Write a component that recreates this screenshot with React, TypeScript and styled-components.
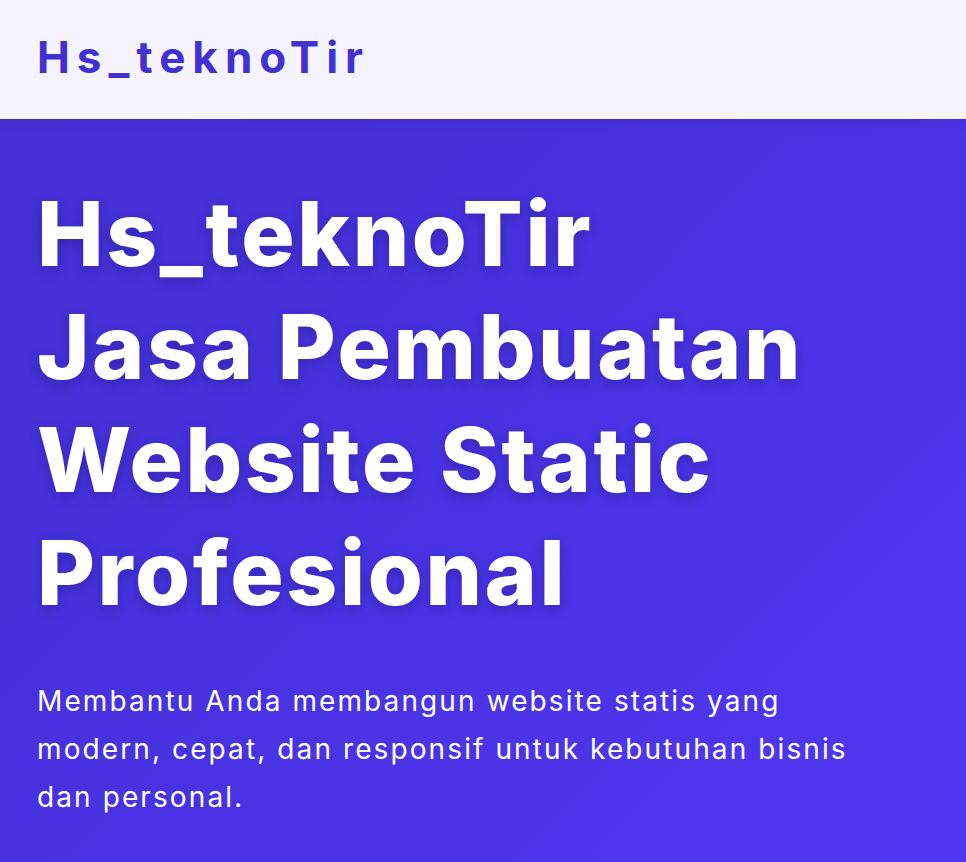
import React from "react";
import styled, { createGlobalStyle } from "styled-components";

const GlobalStyle = createGlobalStyle`
  * {
    box-sizing: border-box;
  }

  body {
    margin: 0;
    font-family: "Inter", "Noto Sans", sans-serif;
    background: #4a34e4;
  }
`;

const Header = styled.header`
  position: relative;
  z-index: 2;
  height: 119px;
  display: flex;
  align-items: center;
  padding: 0 37px 6px;
  background: #f6f4fe;
  box-shadow: 0 2px 12px rgba(30, 20, 90, 0.12);
`;

const Logo = styled.div`
  font-size: 44px;
  font-weight: 700;
  letter-spacing: 7px;
  color: #4330d2;
`;

const Hero = styled.section`
  min-height: 743px;
  padding: 58px 37px 48px;
  background: linear-gradient(135deg, #4230d2 0%, #4833e2 50%, #5137f2 100%);
  color: #ffffff;
`;

const Title = styled.h1`
  margin: 0;
  font-size: 89px;
  font-weight: 800;
  line-height: 113px;
  letter-spacing: 2.6px;
  text-shadow: 0 4px 12px rgba(20, 10, 80, 0.28);
`;

const Line = styled.span`
  display: block;
`;

const Lead = styled.p`
  margin: 48px 0 0;
  max-width: 850px;
  font-size: 28px;
  font-weight: 400;
  line-height: 48px;
  letter-spacing: 2.1px;
`;

const App = () => {
  return (
    <>
      <GlobalStyle />
      <Header>
        <Logo>Hs_teknoTir</Logo>
      </Header>
      <Hero>
        <Title>
          <Line>Hs_teknoTir</Line>
          <Line>Jasa Pembuatan</Line>
          <Line>Website Static</Line>
          <Line>Profesional</Line>
        </Title>
        <Lead>
          Membantu Anda membangun website statis yang modern, cepat, dan responsif untuk kebutuhan bisnis dan personal.
        </Lead>
      </Hero>
    </>
  );
};

export default App;
